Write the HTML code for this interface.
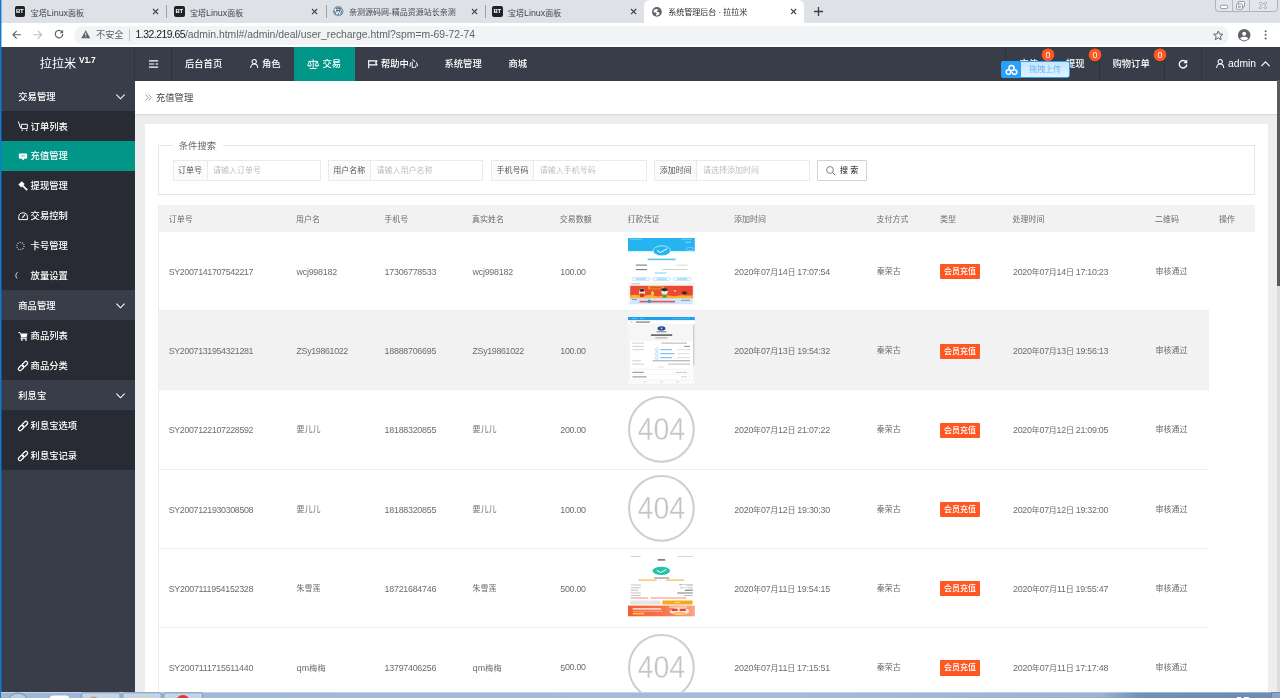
<!DOCTYPE html>
<html lang="zh-CN">
<head>
<meta charset="utf-8">
<title>系统管理后台 · 拉拉米</title>
<style>
*{box-sizing:border-box;margin:0;padding:0}
html,body{width:1280px;height:698px;overflow:hidden;background:#ededed}
body{position:relative;opacity:0.999;font-family:"Liberation Sans","Noto Sans CJK SC",sans-serif;font-size:8px;color:#666}
.a{position:absolute;white-space:nowrap}
svg{position:absolute;overflow:visible}
.w{color:#fff;font-weight:500}
.nav{font-size:9.3px;color:#fff;font-weight:500}
.tabt{font-size:8px;color:#45494e}
.bt{border-radius:2px;background:#202124;color:#fff;font-size:6px;font-weight:bold;text-align:center;letter-spacing:-0.2px}
.lbl{border:1px solid #eaeaea;background:#fbfbfb;font-size:8px;color:#555;text-align:center}
.inp{border:1px solid #eaeaea;border-left:0;background:#fff;font-size:8px;color:#bdbdbd}
.td{font-size:8px;color:#6c6c6c}
.l{font-size:8.9px}
.tag{background:#ff5722;color:#fff;font-size:8px;text-align:center;border-radius:1px;font-weight:500}
.c404{border:2px solid #d9d3d3;border-radius:50%;color:#cfc9c9;text-align:center;font-family:"DejaVu Sans Light","Liberation Sans",sans-serif;font-weight:200}
.badge{background:#ff5722;border-radius:50%;color:#fff;font-size:8px;text-align:center}
</style>
</head>
<body>
<!-- browser chrome -->
<div class="a " style="left:0px;top:0px;width:1280px;height:23px;background:#dee1e6"></div>
<div class="a " style="left:0px;top:23px;width:1280px;height:24px;background:#fff"></div>
<div class="a " style="left:644px;top:0px;width:160.4px;height:23px;background:#fff;border-radius:6px 6px 0 0"></div>
<svg style="left:640.5px;top:19.5px" width="167.5" height="3.5" viewBox="0 0 167.5 3.5"><path d="M0 3.5 C2.6 3.5 3.5 2.4 3.5 0 V3.5 Z M167.5 3.5 C164.8 3.5 163.9 2.4 163.9 0 V3.5 Z" fill="#fff"/></svg>
<div class="a bt" style="left:14.5px;top:6px;width:10.5px;height:10.5px;line-height:10.5px">BT</div>
<div class="a tabt" style="left:30.8px;top:7.00px;height:12px;line-height:12px;">宝塔<span class="l">Linux</span>面板</div>
<div class="a bt" style="left:174px;top:6px;width:10.5px;height:10.5px;line-height:10.5px">BT</div>
<div class="a tabt" style="left:190px;top:7.00px;height:12px;line-height:12px;">宝塔<span class="l">Linux</span>面板</div>
<div class="a bt" style="left:492px;top:6px;width:10.5px;height:10.5px;line-height:10.5px">BT</div>
<div class="a tabt" style="left:508px;top:7.00px;height:12px;line-height:12px;">宝塔<span class="l">Linux</span>面板</div>
<svg style="left:332.5px;top:6px" width="10.5" height="10.5" viewBox="0 0 20 20"><circle cx="10" cy="10" r="9.6" fill="#4a6b88"/><circle cx="10" cy="10" r="8" fill="none" stroke="#e8eef3" stroke-width="1"/><path d="M4 6.5 L7.6 16 L10 9.5 L12.4 16 L16 6.5 M3 6.3 H7 M8.4 6.3 H12.2" fill="none" stroke="#fff" stroke-width="1.9"/></svg>
<div class="a tabt" style="left:349px;top:7.00px;height:12px;line-height:12px;">亲测源码网-精品资源站长亲测</div>
<svg style="left:153.20000000000002px;top:8.700000000000001px" width="5.2" height="5.2" viewBox="0 0 5.2 5.2"><path d="M0 0 L5.2 5.2 M5.2 0 L0 5.2" stroke="#3c4043" stroke-width="1.1" fill="none"/></svg>
<svg style="left:311.9px;top:8.700000000000001px" width="5.2" height="5.2" viewBox="0 0 5.2 5.2"><path d="M0 0 L5.2 5.2 M5.2 0 L0 5.2" stroke="#3c4043" stroke-width="1.1" fill="none"/></svg>
<svg style="left:471.9px;top:8.700000000000001px" width="5.2" height="5.2" viewBox="0 0 5.2 5.2"><path d="M0 0 L5.2 5.2 M5.2 0 L0 5.2" stroke="#3c4043" stroke-width="1.1" fill="none"/></svg>
<svg style="left:631.4px;top:8.700000000000001px" width="5.2" height="5.2" viewBox="0 0 5.2 5.2"><path d="M0 0 L5.2 5.2 M5.2 0 L0 5.2" stroke="#3c4043" stroke-width="1.1" fill="none"/></svg>
<svg style="left:790.9px;top:8.700000000000001px" width="5.2" height="5.2" viewBox="0 0 5.2 5.2"><path d="M0 0 L5.2 5.2 M5.2 0 L0 5.2" stroke="#3c4043" stroke-width="1.1" fill="none"/></svg>
<div class="a " style="left:166px;top:5px;width:1px;height:13px;background:#9aa0a6"></div>
<div class="a " style="left:325.5px;top:5px;width:1px;height:13px;background:#9aa0a6"></div>
<div class="a " style="left:485px;top:5px;width:1px;height:13px;background:#9aa0a6"></div>
<svg style="left:652.3px;top:6.5px" width="9.8" height="9.8" viewBox="0 0 20 20"><circle cx="10" cy="10" r="10" fill="#5f6368"/><path d="M3.2 8.6 C3.4 5.6 6.4 3.6 9 4 C11 4.3 12.4 4.6 12 6 C11.6 7.4 9.6 7.4 9.4 8.8 C9.2 10.2 12 10 13.6 10.6 C15.6 11.4 16 13.6 14.4 15.4 C12.8 17.2 10 17.6 8.4 16.8 C7.2 16.2 8.2 14.6 9.2 13.8 C10.2 13 9.4 11.6 8 11.4 C6 11.1 3 11.6 3.2 8.6 Z" fill="#fff"/></svg>
<div class="a tabt" style="left:668.2px;top:7.00px;height:12px;line-height:12px;color:#2a2c30;">系统管理后台 · 拉拉米</div>
<svg style="left:813.5px;top:6.5px" width="9" height="9" viewBox="0 0 9 9"><path d="M4.5 0 V9 M0 4.5 H9" stroke="#3c4043" stroke-width="1.3" fill="none"/></svg>
<div class="a " style="left:1215px;top:-3px;width:62.5px;height:14.5px;border:1px solid #adb2bb;border-radius:0 0 3.5px 3.5px;background:#e2e5ea"></div>
<div class="a " style="left:1232px;top:0px;width:1px;height:11px;background:#b4b9c1"></div>
<div class="a " style="left:1248.5px;top:0px;width:1px;height:11px;background:#b4b9c1"></div>
<svg style="left:1215px;top:0px" width="63" height="12" viewBox="0 0 63 12"><rect x="5.3" y="5.2" width="7.4" height="3.4" rx="1.5" fill="#fff" stroke="#7d828b" stroke-width="0.8"/><rect x="23.2" y="1.5" width="6.3" height="5.4" rx="0.8" fill="#fff" stroke="#7d828b" stroke-width="0.8"/><rect x="21.5" y="3.9" width="6" height="5.4" rx="0.8" fill="#fff" stroke="#7d828b" stroke-width="0.8"/><rect x="23.6" y="5.9" width="1.8" height="1.6" fill="#e2e5ea" stroke="#7d828b" stroke-width="0.6"/><path d="M45.4 3.1 L50.6 7.7 M50.6 3.1 L45.4 7.7" stroke="#8f949d" stroke-width="2.3" stroke-linecap="round" fill="none"/><path d="M45.4 3.1 L50.6 7.7 M50.6 3.1 L45.4 7.7" stroke="#fff" stroke-width="1.05" stroke-linecap="round" fill="none"/></svg>
<svg style="left:11.5px;top:29.5px" width="9.5" height="9.5" viewBox="0 0 16 16"><path d="M15 8 H2 M8 1.5 L1.5 8 L8 14.5" stroke="#5f6368" stroke-width="1.8" fill="none"/></svg>
<svg style="left:32.8px;top:29.5px" width="9.5" height="9.5" viewBox="0 0 16 16"><path d="M1 8 H14 M8 1.5 L14.5 8 L8 14.5" stroke="#babcbe" stroke-width="1.8" fill="none"/></svg>
<svg style="left:54px;top:29.3px" width="10" height="10" viewBox="0 0 16 16"><path d="M13.2 5.2 A6 6 0 1 0 14 8" stroke="#5f6368" stroke-width="1.9" fill="none"/><path d="M14.6 1.2 V6.6 H9.2 Z" fill="#5f6368"/></svg>
<div class="a " style="left:73.5px;top:25.7px;width:1155px;height:19px;background:#f1f3f4;border-radius:9.5px"></div>
<svg style="left:80.5px;top:30.2px" width="9.5" height="8.6" viewBox="0 0 20 18"><path d="M10 0.5 L19.5 17.5 H0.5 Z" fill="#5f6368"/><path d="M10 6 V11.5 M10 13.2 V15.3" stroke="#f1f3f4" stroke-width="2.2"/></svg>
<div class="a " style="left:96px;top:28.60px;height:12px;line-height:12px;font-size:9.2px;color:#5f6368;">不安全</div>
<div class="a " style="left:128.8px;top:29px;width:1px;height:11.5px;background:#c4c7ca"></div>
<div class="a url" style="left:135.6px;top:28.00px;height:13px;line-height:13px;font-size:10.4px;color:#202124;letter-spacing:-0.501px;">1.32.219.65</div>
<div class="a url" style="left:184.9px;top:28.00px;height:13px;line-height:13px;font-size:10.4px;color:#5f6368;letter-spacing:-0.010px;">/admin.html#/admin/deal/user_recharge.html?spm=m-69-72-74</div>
<svg style="left:1212.5px;top:29.5px" width="10.5" height="10.5" viewBox="0 0 20 20"><path d="M10 1.8 L12.5 7.6 L18.8 8.1 L14 12.2 L15.5 18.4 L10 15.1 L4.5 18.4 L6 12.2 L1.2 8.1 L7.5 7.6 Z" fill="none" stroke="#5f6368" stroke-width="1.9" stroke-linejoin="round"/></svg>
<svg style="left:1238px;top:28.5px" width="12.4" height="12.4" viewBox="0 0 20 20"><circle cx="10" cy="10" r="10" fill="#5f6368"/><circle cx="10" cy="7.6" r="3.3" fill="#fff"/><path d="M3.4 15.2 C5 11.8 15 11.8 16.6 15.2 A8.2 8.2 0 0 1 3.4 15.2 Z" fill="#fff"/></svg>
<svg style="left:1263px;top:29px" width="5" height="12" viewBox="0 0 5 12"><circle cx="2.6" cy="2.2" r="1" fill="#5f6368"/><circle cx="2.6" cy="5.8" r="1" fill="#5f6368"/><circle cx="2.6" cy="9.4" r="1" fill="#5f6368"/></svg>
<!-- app header -->
<div class="a " style="left:0px;top:47px;width:1280px;height:34px;background:#393d49"></div>
<div class="a " style="left:134px;top:47px;width:1px;height:34px;background:rgba(0,0,0,.16)"></div>
<div class="a " style="left:171.3px;top:47px;width:1px;height:34px;background:rgba(0,0,0,.16)"></div>
<div class="a " style="left:1005.3px;top:47px;width:1px;height:34px;background:rgba(0,0,0,.16)"></div>
<div class="a " style="left:1052.3px;top:47px;width:1px;height:34px;background:rgba(0,0,0,.16)"></div>
<div class="a " style="left:1098.5px;top:47px;width:1px;height:34px;background:rgba(0,0,0,.16)"></div>
<div class="a " style="left:1163.8px;top:47px;width:1px;height:34px;background:rgba(0,0,0,.16)"></div>
<div class="a " style="left:1201.3px;top:47px;width:1px;height:34px;background:rgba(0,0,0,.16)"></div>
<div class="a w" style="left:39.8px;top:55.20px;height:18px;line-height:18px;font-size:12.1px;font-weight:400;">拉拉米</div>
<div class="a w" style="left:79px;top:55.20px;height:10px;line-height:10px;font-size:8.4px;font-weight:700;letter-spacing:-0.2px;">V1.7</div>
<svg style="left:149px;top:60px" width="9.5" height="8" viewBox="0 0 9.5 8"><path d="M0 0.8 H9.2 M0 4 H5 M6.4 4 H9.2 M0 7.2 H9.2" stroke="#fff" stroke-width="1.2" fill="none"/></svg>
<div class="a " style="left:294px;top:47px;width:60.5px;height:34px;background:#009688"></div>
<div class="a nav" style="left:185px;top:57.00px;height:14px;line-height:14px;">后台首页</div>
<svg style="left:249.8px;top:59.3px" width="8.4" height="9" viewBox="0 0 8.4 9"><circle cx="4.2" cy="2.7" r="2.15" fill="none" stroke="#fff" stroke-width="1.05"/><path d="M0.7 8.9 C0.7 6.4 2 5 4.2 5 C6.4 5 7.7 6.4 7.7 8.9" fill="none" stroke="#fff" stroke-width="1.05"/></svg>
<div class="a nav" style="left:262px;top:57.00px;height:14px;line-height:14px;">角色</div>
<svg style="left:306.6px;top:59.2px" width="12.4" height="10" viewBox="0 0 23 19"><path d="M11.5 0.5 V17 M5 18 H18 M2.5 4.5 H20.5 M4.5 4.5 L1 12 M4.5 4.5 L8 12 M18.5 4.5 L15 12 M18.5 4.5 L22 12" stroke="#fff" stroke-width="1.8" fill="none"/><path d="M0.5 12 H8.5 C8 15.5 1 15.5 0.5 12 Z M14.5 12 H22.5 C22 15.5 15 15.5 14.5 12 Z" fill="#fff"/></svg>
<div class="a nav" style="left:322.5px;top:57.00px;height:14px;line-height:14px;">交易</div>
<svg style="left:368px;top:59.8px" width="10" height="8.2" viewBox="0 0 10 8.2"><path d="M0.7 0 V8.2 M0.7 0.9 H9 L7.7 2.9 L9 4.9 H0.7" stroke="#fff" stroke-width="1.15" fill="none" stroke-linejoin="round"/></svg>
<div class="a nav" style="left:381px;top:57.00px;height:14px;line-height:14px;">帮助中心</div>
<div class="a nav" style="left:444.5px;top:57.00px;height:14px;line-height:14px;">系统管理</div>
<div class="a nav" style="left:508.5px;top:57.00px;height:14px;line-height:14px;">商城</div>
<div class="a nav" style="left:1019.5px;top:57.00px;height:14px;line-height:14px;">充值</div>
<div class="a nav" style="left:1066px;top:57.00px;height:14px;line-height:14px;">提现</div>
<div class="a nav" style="left:1112.5px;top:57.00px;height:14px;line-height:14px;">购物订单</div>
<svg style="left:1041.3px;top:47px" width="14" height="16" viewBox="0 0 14 16"><circle cx="7" cy="7.8" r="6.35" fill="#ff5722"/><text x="7" y="10.9" text-anchor="middle" font-family="Liberation Sans, sans-serif" font-size="8.8" fill="#fff">0</text></svg>
<svg style="left:1087.6px;top:47px" width="14" height="16" viewBox="0 0 14 16"><circle cx="7" cy="7.8" r="6.35" fill="#ff5722"/><text x="7" y="10.9" text-anchor="middle" font-family="Liberation Sans, sans-serif" font-size="8.8" fill="#fff">0</text></svg>
<svg style="left:1153.2px;top:47px" width="14" height="16" viewBox="0 0 14 16"><circle cx="7" cy="7.8" r="6.35" fill="#ff5722"/><text x="7" y="10.9" text-anchor="middle" font-family="Liberation Sans, sans-serif" font-size="8.8" fill="#fff">0</text></svg>
<svg style="left:1177.5px;top:59px" width="10" height="10" viewBox="0 0 16 16"><path d="M13 5 A6 6 0 1 0 14 9" stroke="#fff" stroke-width="2.2" fill="none"/><path d="M14.8 0.8 V6.8 H8.8 Z" fill="#fff"/></svg>
<svg style="left:1215.6px;top:59.3px" width="8.4" height="9" viewBox="0 0 8.4 9"><circle cx="4.2" cy="2.7" r="2.15" fill="none" stroke="#fff" stroke-width="1.05"/><path d="M0.7 8.9 C0.7 6.4 2 5 4.2 5 C6.4 5 7.7 6.4 7.7 8.9" fill="none" stroke="#fff" stroke-width="1.05"/></svg>
<div class="a nav" style="left:1228px;top:57.00px;height:14px;line-height:14px;font-size:10.3px;font-weight:400;">admin</div>
<svg style="left:1261px;top:61px" width="9" height="5.5" viewBox="0 0 9 5.5"><path d="M0.4 5.2 L4.5 0.8 L8.6 5.2" stroke="#fff" stroke-width="1.1" fill="none"/></svg>
<div class="a " style="left:1000.8px;top:61.3px;width:69.2px;height:16.5px;background:linear-gradient(#c4e5ff,#e3f3ff);border:1px solid #2ba0f8;border-radius:2.5px"></div>
<div class="a " style="left:1000.8px;top:61.3px;width:20px;height:16.5px;background:#2ba0f8;border-radius:2.5px 0 0 2.5px"></div>
<svg style="left:1004.5px;top:63.5px" width="13" height="12" viewBox="0 0 26 24"><circle cx="13" cy="8" r="5.2" fill="none" stroke="#fff" stroke-width="3"/><circle cx="7" cy="16" r="4.6" fill="none" stroke="#fff" stroke-width="3"/><path d="M14.5 16 A4.6 4.6 0 1 0 19 11.5" fill="none" stroke="#fff" stroke-width="3"/></svg>
<div class="a " style="left:1029.3px;top:63.80px;height:12px;line-height:12px;font-size:8px;color:#6bb2f5;">拖拽上传</div>
<!-- sidebar -->
<div class="a " style="left:0px;top:81px;width:135px;height:618px;background:#393d49"></div>
<div class="a nav" style="left:18.3px;top:89.65px;height:14px;line-height:14px;">交易管理</div>
<svg style="left:116px;top:93.65px" width="9" height="5.5" viewBox="0 0 9 5.5"><path d="M0.4 0.6 L4.5 4.8 L8.6 0.6" stroke="#fff" stroke-width="1.1" fill="none"/></svg>
<div class="a " style="left:0px;top:110.7px;width:135px;height:29.95px;background:#282b33"></div>
<svg style="left:17.8px;top:121.45px" width="10" height="10" viewBox="0 0 10 10"><path d="M0.3 0.4 L2.6 7.2" stroke="#fff" stroke-width="1" fill="none"/><path d="M3.4 3.3 H9.3 V7.6 H3.4 Z" stroke="#fff" stroke-width="1" fill="none"/><circle cx="4.2" cy="9.3" r="0.75" fill="#fff"/><circle cx="8.6" cy="9.3" r="0.75" fill="#fff"/></svg>
<div class="a nav" style="left:30.6px;top:119.55px;height:14px;line-height:14px;">订单列表</div>
<div class="a " style="left:0px;top:140.6px;width:135px;height:29.95px;background:#009688"></div>
<svg style="left:17.8px;top:151.35px" width="10" height="10" viewBox="0 0 10 10"><rect x="0.9" y="2.5" width="8.2" height="5.2" rx="0.8" fill="#fff"/><rect x="4.3" y="7.5" width="1.6" height="1.6" fill="#fff"/><rect x="3.2" y="4.6" width="3.6" height="0.7" fill="#009688"/></svg>
<div class="a nav" style="left:30.6px;top:149.45px;height:14px;line-height:14px;">充值管理</div>
<div class="a " style="left:0px;top:170.5px;width:135px;height:29.95px;background:#282b33"></div>
<svg style="left:17.8px;top:181.25px" width="10" height="10" viewBox="0 0 10 10"><path d="M0.4 3.6 L3.8 0.3 L6.6 3.1 L5.5 4.2 L9.8 8.6 L8.6 9.8 L4.3 5.4 L3.2 6.5 Z" fill="#fff"/></svg>
<div class="a nav" style="left:30.6px;top:179.35px;height:14px;line-height:14px;">提现管理</div>
<div class="a " style="left:0px;top:200.4px;width:135px;height:29.95px;background:#282b33"></div>
<svg style="left:17.8px;top:211.15px" width="10" height="10" viewBox="0 0 10 10"><path d="M0.8 8.6 V5.4 C0.8 0.6 9.4 0.6 9.4 5.4 V8.6 Z" stroke="#fff" stroke-width="1" fill="none" stroke-linejoin="round"/><path d="M4.2 6.9 L7.2 3.4" stroke="#fff" stroke-width="1.1"/></svg>
<div class="a nav" style="left:30.6px;top:209.25px;height:14px;line-height:14px;">交易控制</div>
<div class="a " style="left:0px;top:230.3px;width:135px;height:29.95px;background:#282b33"></div>
<svg style="left:17.8px;top:241.05px" width="10" height="10" viewBox="0 0 10 10"><circle cx="2.4" cy="5" r="3.6" stroke="#e8e8ea" stroke-width="1.1" stroke-dasharray="0.9 1.36" fill="none"/></svg>
<div class="a nav" style="left:30.6px;top:239.15px;height:14px;line-height:14px;">卡号管理</div>
<div class="a " style="left:0px;top:260.2px;width:135px;height:29.95px;background:#282b33"></div>
<svg style="left:17.8px;top:270.95px" width="10" height="10" viewBox="0 0 10 10"><path d="M-0.4 1.2 C-2.6 3.2 -2.6 5.4 -1.2 7.4" stroke="#dcdcdf" stroke-width="1" fill="none"/></svg>
<div class="a nav" style="left:30.6px;top:269.05px;height:14px;line-height:14px;">放量设置</div>
<div class="a nav" style="left:18.3px;top:298.95px;height:14px;line-height:14px;">商品管理</div>
<svg style="left:116px;top:302.95px" width="9" height="5.5" viewBox="0 0 9 5.5"><path d="M0.4 0.6 L4.5 4.8 L8.6 0.6" stroke="#fff" stroke-width="1.1" fill="none"/></svg>
<div class="a " style="left:0px;top:320.0px;width:135px;height:29.95px;background:#282b33"></div>
<svg style="left:17.8px;top:330.75px" width="10" height="10" viewBox="0 0 10 10"><path d="M0.3 1.6 H2 L2.5 2.8" stroke="#fff" stroke-width="1" fill="none"/><path d="M2.2 2.6 H9.4 L8.6 6.6 H3.2 Z" fill="#fff"/><path d="M3.2 6.4 L2.9 7.6 H8.8" stroke="#fff" stroke-width="0.9" fill="none"/><circle cx="3.8" cy="8.9" r="0.85" fill="#fff"/><circle cx="8" cy="8.9" r="0.85" fill="#fff"/></svg>
<div class="a nav" style="left:30.6px;top:328.85px;height:14px;line-height:14px;">商品列表</div>
<div class="a " style="left:0px;top:349.9px;width:135px;height:29.95px;background:#282b33"></div>
<svg style="left:17.8px;top:360.65px" width="10" height="10" viewBox="0 0 10 10"><g transform="rotate(-45 5 5)" stroke="#fff" stroke-width="1.25" fill="none"><rect x="-0.9" y="3.3" width="6.4" height="3.4" rx="1.7"/><rect x="4.5" y="3.3" width="6.4" height="3.4" rx="1.7"/></g></svg>
<div class="a nav" style="left:30.6px;top:358.75px;height:14px;line-height:14px;">商品分类</div>
<div class="a nav" style="left:18.3px;top:389.25px;height:14px;line-height:14px;">利息宝</div>
<svg style="left:116px;top:393.25px" width="9" height="5.5" viewBox="0 0 9 5.5"><path d="M0.4 0.6 L4.5 4.8 L8.6 0.6" stroke="#fff" stroke-width="1.1" fill="none"/></svg>
<div class="a " style="left:0px;top:409.7px;width:135px;height:29.95px;background:#282b33"></div>
<svg style="left:17.8px;top:421.05px" width="10" height="10" viewBox="0 0 10 10"><g transform="rotate(-45 5 5)" stroke="#fff" stroke-width="1.25" fill="none"><rect x="-0.9" y="3.3" width="6.4" height="3.4" rx="1.7"/><rect x="4.5" y="3.3" width="6.4" height="3.4" rx="1.7"/></g></svg>
<div class="a nav" style="left:30.6px;top:419.15px;height:14px;line-height:14px;">利息宝选项</div>
<div class="a " style="left:0px;top:439.6px;width:135px;height:29.95px;background:#282b33"></div>
<svg style="left:17.8px;top:450.95px" width="10" height="10" viewBox="0 0 10 10"><g transform="rotate(-45 5 5)" stroke="#fff" stroke-width="1.25" fill="none"><rect x="-0.9" y="3.3" width="6.4" height="3.4" rx="1.7"/><rect x="4.5" y="3.3" width="6.4" height="3.4" rx="1.7"/></g></svg>
<div class="a nav" style="left:30.6px;top:449.05px;height:14px;line-height:14px;">利息宝记录</div>
<div class="a " style="left:0px;top:0px;width:1px;height:698px;background:#0d7ccf"></div>
<div class="a " style="left:1px;top:0px;width:1px;height:698px;background:rgba(13,124,207,.45)"></div>
<!-- content -->
<div class="a " style="left:135px;top:81px;width:1145px;height:33px;background:#fff;box-shadow:0 1px 1.5px rgba(0,0,0,.10)"></div>
<svg style="left:145px;top:94.2px" width="7" height="7" viewBox="0 0 7 7"><path d="M0.5 0.5 L3.2 3.5 L0.5 6.5 M3.5 0.5 L6.2 3.5 L3.5 6.5" stroke="#888" stroke-width="0.8" fill="none"/></svg>
<div class="a " style="left:156px;top:91.30px;height:14px;line-height:14px;font-size:9.3px;color:#444;">充值管理</div>
<div class="a " style="left:144.7px;top:124px;width:1123.3px;height:600px;background:#fff"></div>
<div class="a " style="left:158.2px;top:145.4px;width:1096.6px;height:49.2px;border:1px solid #e6e6e6"></div>
<div class="a " style="left:172.5px;top:140px;width:50px;height:10px;background:#fff"></div>
<div class="a " style="left:178.8px;top:139.20px;height:14px;line-height:14px;font-size:9.3px;color:#666;">条件搜索</div>
<div class="a lbl" style="left:172.5px;top:160px;width:35px;height:20.6px;line-height:20.4px">订单号</div>
<div class="a inp" style="left:207.5px;top:160px;width:113.2px;height:20.6px;line-height:20.4px;padding-left:5.5px">请输入订单号</div>
<div class="a lbl" style="left:327.5px;top:160px;width:43.5px;height:20.6px;line-height:20.4px">用户名称</div>
<div class="a inp" style="left:371.0px;top:160px;width:112px;height:20.6px;line-height:20.4px;padding-left:5.5px">请输入用户名称</div>
<div class="a lbl" style="left:490.7px;top:160px;width:43.5px;height:20.6px;line-height:20.4px">手机号码</div>
<div class="a inp" style="left:534.2px;top:160px;width:112.5px;height:20.6px;line-height:20.4px;padding-left:5.5px">请输入手机号码</div>
<div class="a lbl" style="left:654px;top:160px;width:43.4px;height:20.6px;line-height:20.4px">添加时间</div>
<div class="a inp" style="left:697.4px;top:160px;width:113px;height:20.6px;line-height:20.4px;padding-left:5.5px">请选择添加时间</div>
<div class="a " style="left:817px;top:160px;width:50px;height:20.6px;border:1px solid #d2d2d2;background:#fff;border-radius:1px"></div>
<svg style="left:825.5px;top:165.5px" width="10" height="10" viewBox="0 0 10 10"><circle cx="4" cy="4" r="3.4" stroke="#666" stroke-width="0.8" fill="none"/><path d="M6.5 6.5 L9.2 9.2" stroke="#666" stroke-width="1"/></svg>
<div class="a " style="left:840px;top:165.00px;height:12px;line-height:12px;font-size:8px;color:#444;font-weight:500;">搜 索</div>
<div class="a " style="left:1277.3px;top:80.4px;width:2.7px;height:618px;background:#dcdcdc"></div>
<div class="a " style="left:1277.3px;top:80.4px;width:2.7px;height:206px;background:#5a5a5a"></div>
<!-- table -->
<div class="a " style="left:158.2px;top:205px;width:1096.6px;height:26.6px;background:#f2f2f2"></div>
<div class="a td" style="left:168.7px;top:214.30px;height:12px;line-height:12px;">订单号</div>
<div class="a td" style="left:296px;top:214.30px;height:12px;line-height:12px;">用户名</div>
<div class="a td" style="left:384.3px;top:214.30px;height:12px;line-height:12px;">手机号</div>
<div class="a td" style="left:472px;top:214.30px;height:12px;line-height:12px;">真实姓名</div>
<div class="a td" style="left:559.7px;top:214.30px;height:12px;line-height:12px;">交易数额</div>
<div class="a td" style="left:627.5px;top:214.30px;height:12px;line-height:12px;">打款凭证</div>
<div class="a td" style="left:734px;top:214.30px;height:12px;line-height:12px;">添加时间</div>
<div class="a td" style="left:876.5px;top:214.30px;height:12px;line-height:12px;">支付方式</div>
<div class="a td" style="left:940px;top:214.30px;height:12px;line-height:12px;">类型</div>
<div class="a td" style="left:1012.5px;top:214.30px;height:12px;line-height:12px;">处理时间</div>
<div class="a td" style="left:1155px;top:214.30px;height:12px;line-height:12px;">二维码</div>
<div class="a td" style="left:1219px;top:214.30px;height:12px;line-height:12px;">操作</div>
<svg width="0" height="0" style="left:0;top:0"><defs><filter id="bl" x="-5%" y="-5%" width="110%" height="110%"><feGaussianBlur stdDeviation="0.45"/></filter><filter id="bl2" x="-5%" y="-5%" width="110%" height="110%"><feGaussianBlur stdDeviation="0.3"/></filter></defs></svg>
<div class="a " style="left:158.2px;top:310.13px;width:1051px;height:1px;background:#ededed"></div>
<div class="a td" style="left:168.7px;top:265.91px;height:12px;line-height:12px;letter-spacing:-0.352px;"><span class="l">SY2007141707542217</span></div>
<div class="a td" style="left:296.5px;top:265.91px;height:12px;line-height:12px;letter-spacing:-0.226px;"><span class="l">wcj998182</span></div>
<div class="a td" style="left:384.6px;top:265.91px;height:12px;line-height:12px;letter-spacing:-0.254px;"><span class="l">17306778533</span></div>
<div class="a td" style="left:472.5px;top:265.91px;height:12px;line-height:12px;letter-spacing:-0.226px;"><span class="l">wcj998182</span></div>
<div class="a td" style="left:560.3px;top:265.91px;height:12px;line-height:12px;letter-spacing:-0.293px;"><span class="l">100.00</span></div>
<svg style="left:627.8px;top:237.6px" width="66.8" height="66.8" viewBox="0 0 66.8 66.8"><rect width="66.8" height="66.8" fill="#fff"/><g filter="url(#bl)"><rect x="0" y="0" width="66.8" height="13.2" fill="#27b4f1"/><rect x="2" y="0.80" width="12.0" height="0.8" fill="#7fd2f7"/><rect x="53" y="0.80" width="11.0" height="0.8" fill="#7fd2f7"/><rect x="57.5" y="3.70" width="5.5" height="1" fill="#9adcf9"/><rect x="58.5" y="9.5" width="7" height="3" fill="none" rx="1.5" stroke="#8fd8f8" stroke-width="0.6"/><ellipse cx="33.8" cy="12.8" rx="8.7" ry="5" fill="#27b4f1" stroke="#dff4fd" stroke-width="0.7"/><path d="M29.2 12.6 L32.6 14.6 L39.2 10.6" stroke="#fff" stroke-width="1" fill="none"/><rect x="19.6" y="20.60" width="27.9" height="1.6" fill="#62c0ef"/><rect x="7.8" y="26.55" width="11.2" height="1.1" fill="#7d7d7d"/><rect x="48.5" y="26.70" width="11.0" height="0.8" fill="#d2d2d2"/><rect x="7.8" y="31.05" width="11.2" height="1.1" fill="#7d7d7d"/><rect x="34.5" y="31.20" width="25.0" height="0.8" fill="#c6c6c6"/><rect x="26.5" y="34.50" width="12.0" height="1" fill="#86cdf3"/><rect x="3.9" y="39.6" width="18" height="2.9" fill="#f4fbff" rx="1.45" stroke="#a9dcf7" stroke-width="0.6"/><rect x="7.9" y="40.60" width="10.0" height="0.9" fill="#6ec2f0"/><rect x="24.6" y="39.6" width="18" height="2.9" fill="#f4fbff" rx="1.45" stroke="#a9dcf7" stroke-width="0.6"/><rect x="28.6" y="40.60" width="10.0" height="0.9" fill="#6ec2f0"/><rect x="45.2" y="39.6" width="18" height="2.9" fill="#f4fbff" rx="1.45" stroke="#a9dcf7" stroke-width="0.6"/><rect x="49.2" y="40.60" width="10.0" height="0.9" fill="#6ec2f0"/><rect x="0" y="44.4" width="66.8" height="22.4" fill="#f6f6f6"/><rect x="3.5" y="45.40" width="8.5" height="0.8" fill="#bdbdbd"/><defs><linearGradient id="g1" x1="0" x2="1"><stop offset="0" stop-color="#ea4a30"/><stop offset="0.5" stop-color="#ee4d33"/><stop offset="1" stop-color="#e9432f"/></linearGradient></defs><rect x="2.2" y="47.8" width="62.6" height="12.6" fill="url(#g1)"/><path d="M2.2 60.4 V57.5 C8 55 12 59 18 57.5 C24 56 27 59.5 33 58 C40 56 44 59.5 50 57.8 C56 56.3 60 58.5 64.8 57 V60.4 Z" fill="#f9b233"/><rect x="20" y="48.6" width="16" height="2.6" fill="#f7a928" rx="0.6"/><rect x="22" y="49.45" width="12.0" height="0.9" fill="#8a3a1a"/><ellipse cx="14" cy="54" rx="3" ry="3.6" fill="#f8e3d0"/><ellipse cx="14" cy="52.2" rx="2.6" ry="1.5" fill="#3b2a22"/><rect x="12" y="55.5" width="4" height="3.4" fill="#d8322a"/><ellipse cx="36.5" cy="53.6" rx="3.2" ry="3.6" fill="#f8e3d0"/><ellipse cx="36.5" cy="51.6" rx="3.3" ry="1.7" fill="#2a2a2a"/><rect x="34.5" y="56.6" width="4" height="3" fill="#3c9c63"/><ellipse cx="24.5" cy="55.5" rx="1.6" ry="2.6" fill="#f4c542"/><ellipse cx="56.5" cy="54.8" rx="2.6" ry="1.6" fill="#3a2a2a"/><ellipse cx="47" cy="52.8" rx="1.2" ry="0.9" fill="#f7c8b8"/><rect x="2.2" y="60.4" width="62.6" height="5.6" fill="#cfe9fa"/><rect x="11.5" y="62.80" width="35.5" height="1.6" fill="#e8505a"/><circle cx="21.3" cy="63.3" r="1.7" fill="#3b8fe8"/><rect x="4" y="61.20" width="5.0" height="0.8" fill="#5e86b8"/><rect x="53" y="61.80" width="9.0" height="1.2" fill="#8aa6c4"/></g></svg>
<div class="a td" style="left:734.3px;top:265.91px;height:12px;line-height:12px;letter-spacing:-0.234px;"><span class="l">2020</span>年<span class="l">07</span>月<span class="l">14</span>日 <span class="l">17:07:54</span></div>
<div class="a td" style="left:876.8px;top:265.91px;height:12px;line-height:12px;">秦荣古</div>
<div class="a tag" style="left:940.4px;top:264.31px;width:39.2px;height:15.2px;line-height:15.2px">会员充值</div>
<div class="a td" style="left:1013px;top:265.91px;height:12px;line-height:12px;letter-spacing:-0.254px;"><span class="l">2020</span>年<span class="l">07</span>月<span class="l">14</span>日 <span class="l">17:10:23</span></div>
<div class="a td" style="left:1155.6px;top:265.91px;height:12px;line-height:12px;">审核通过</div>
<div class="a " style="left:158.2px;top:310.83px;width:1051px;height:79.23px;background:#f2f2f2"></div>
<div class="a " style="left:158.2px;top:389.36px;width:1051px;height:1px;background:#ededed"></div>
<div class="a td" style="left:168.7px;top:345.14px;height:12px;line-height:12px;letter-spacing:-0.352px;"><span class="l">SY2007131954321281</span></div>
<div class="a td" style="left:296.5px;top:345.14px;height:12px;line-height:12px;letter-spacing:-0.351px;"><span class="l">ZSy19861022</span></div>
<div class="a td" style="left:384.6px;top:345.14px;height:12px;line-height:12px;letter-spacing:-0.254px;"><span class="l">18888706695</span></div>
<div class="a td" style="left:472.5px;top:345.14px;height:12px;line-height:12px;letter-spacing:-0.351px;"><span class="l">ZSy19861022</span></div>
<div class="a td" style="left:560.3px;top:345.14px;height:12px;line-height:12px;letter-spacing:-0.293px;"><span class="l">100.00</span></div>
<svg style="left:627.8px;top:316.83px" width="66.8" height="66.8" viewBox="0 0 66.8 66.8"><rect width="66.8" height="66.8" fill="#f4f4f5"/><g filter="url(#bl)"><rect x="0" y="0" width="66.8" height="3.3" fill="#1ba1ef"/><rect x="3.5" y="1.25" width="5.5" height="0.7" fill="#6cc4f6"/><rect x="12" y="1.25" width="4.0" height="0.7" fill="#6cc4f6"/><circle cx="45.3" cy="1.7" r="0.8" fill="#58d36a"/><rect x="47" y="1.35" width="15.0" height="0.7" fill="#58b8f3"/><rect x="0" y="3.3" width="66.8" height="3.9" fill="#fff"/><rect x="2.5" y="4.70" width="2.0" height="0.8" fill="#62b4f2"/><rect x="7.8" y="4.55" width="14.0" height="1.1" fill="#6b6b6b"/><rect x="0" y="7.2" width="66.8" height="16.8" fill="#f6f6f7"/><rect x="65.2" y="7.8" width="1.2" height="40.2" fill="#c6c6c6"/><ellipse cx="33.5" cy="11.4" rx="3.9" ry="2.05" fill="#23489c"/><circle cx="33.5" cy="11.4" r="0.8" fill="#d6e2fb"/><rect x="28.7" y="14.35" width="9.5" height="0.9" fill="#6a6a6a"/><rect x="22.9" y="17.20" width="21.3" height="1.8" fill="#6e6e6e"/><rect x="27.2" y="20.45" width="12.0" height="0.9" fill="#9a9a9a"/><rect x="2.2" y="24" width="62.4" height="27.9" fill="#fff"/><rect x="4.4" y="25.65" width="11.6" height="0.9" fill="#cbcbcb"/><rect x="33.3" y="25.65" width="25.7" height="0.9" fill="#a8a8a8"/><rect x="4.4" y="28.95" width="11.6" height="0.9" fill="#cbcbcb"/><rect x="56.2" y="28.90" width="5.8" height="1" fill="#8a8a8a"/><rect x="4.4" y="32.25" width="11.6" height="0.9" fill="#cbcbcb"/><rect x="28.5" y="31.5" width="0.6" height="10" fill="#b9daf8"/><circle cx="28.8" cy="32.7" r="1.7" fill="#eef6fe" stroke="#a3cff7" stroke-width="0.5"/><rect x="32.3" y="32.20" width="11.5" height="1" fill="#6db2f2"/><rect x="49.3" y="32.30" width="12.7" height="0.8" fill="#d6d6d6"/><circle cx="28.8" cy="36.7" r="1.7" fill="#eef6fe" stroke="#a3cff7" stroke-width="0.5"/><rect x="32.3" y="36.20" width="14.1" height="1" fill="#6db2f2"/><rect x="49.3" y="36.30" width="12.7" height="0.8" fill="#d6d6d6"/><circle cx="28.8" cy="40.7" r="1.7" fill="#eef6fe" stroke="#a3cff7" stroke-width="0.5"/><rect x="32.3" y="40.20" width="11.5" height="1" fill="#6db2f2"/><rect x="49.3" y="40.30" width="12.7" height="0.8" fill="#d6d6d6"/><rect x="4.4" y="43.35" width="8.4" height="0.9" fill="#cbcbcb"/><rect x="24.7" y="43.35" width="37.3" height="0.9" fill="#9a9a9a"/><rect x="4.4" y="46.65" width="11.6" height="0.9" fill="#cbcbcb"/><rect x="40.3" y="46.65" width="21.7" height="0.9" fill="#b3b3b3"/><rect x="29.3" y="49.65" width="6.7" height="0.7" fill="#d0d0d0"/><rect x="0" y="51.9" width="66.8" height="1" fill="#f3f3f4"/><rect x="2.2" y="52.9" width="62.4" height="9.1" fill="#fff"/><rect x="4.4" y="54.80" width="11.4" height="1" fill="#8a8a8a"/><rect x="47.7" y="54.90" width="11.3" height="0.8" fill="#b8b8b8"/><rect x="61" y="54.90" width="1.0" height="0.8" fill="#ccc"/><rect x="2.2" y="57.35" width="62.4" height="0.5" fill="#eeeeee"/><rect x="4.4" y="59.40" width="14.2" height="1" fill="#8a8a8a"/><rect x="53" y="59.50" width="6.0" height="0.8" fill="#c2c2c2"/><rect x="61" y="59.50" width="1.0" height="0.8" fill="#ccc"/><rect x="0" y="62.9" width="66.8" height="3.9" fill="#fbfbfb"/><rect x="15.4" y="64.40" width="3.2" height="0.8" fill="#d4d4d4"/><rect x="31.799999999999997" y="64.40" width="3.2" height="0.8" fill="#d4d4d4"/><rect x="48.0" y="64.40" width="3.2" height="0.8" fill="#d4d4d4"/></g></svg>
<div class="a td" style="left:734.3px;top:345.14px;height:12px;line-height:12px;letter-spacing:-0.234px;"><span class="l">2020</span>年<span class="l">07</span>月<span class="l">13</span>日 <span class="l">19:54:32</span></div>
<div class="a td" style="left:876.8px;top:345.14px;height:12px;line-height:12px;">秦荣古</div>
<div class="a tag" style="left:940.4px;top:343.54px;width:39.2px;height:15.2px;line-height:15.2px">会员充值</div>
<div class="a td" style="left:1013px;top:345.14px;height:12px;line-height:12px;letter-spacing:-0.254px;"><span class="l">2020</span>年<span class="l">07</span>月<span class="l">13</span>日 <span class="l">19:56:13</span></div>
<div class="a td" style="left:1155.6px;top:345.14px;height:12px;line-height:12px;">审核通过</div>
<div class="a " style="left:158.2px;top:468.59px;width:1051px;height:1px;background:#ededed"></div>
<div class="a td" style="left:168.7px;top:424.38px;height:12px;line-height:12px;letter-spacing:-0.352px;"><span class="l">SY2007122107228592</span></div>
<div class="a td" style="left:296.5px;top:424.38px;height:12px;line-height:12px;letter-spacing:0.000px;">要儿儿</div>
<div class="a td" style="left:384.6px;top:424.38px;height:12px;line-height:12px;letter-spacing:-0.254px;"><span class="l">18188320855</span></div>
<div class="a td" style="left:472.5px;top:424.38px;height:12px;line-height:12px;letter-spacing:0.000px;">要儿儿</div>
<div class="a td" style="left:560.3px;top:424.38px;height:12px;line-height:12px;letter-spacing:-0.293px;"><span class="l">200.00</span></div>
<svg style="left:627.8px;top:396.06px" width="66.8" height="66.8" viewBox="0 0 66.8 66.8"><circle cx="33.4" cy="33.4" r="32.35" fill="none" stroke="#d3cece" stroke-width="2.1"/><text x="33.4" y="43.8" text-anchor="middle" font-family="Liberation Sans, sans-serif" font-size="31.6" textLength="47.6" lengthAdjust="spacingAndGlyphs" fill="#c9c4c4">404</text><text x="33.4" y="43.8" text-anchor="middle" font-family="Liberation Sans, sans-serif" font-size="31.6" textLength="47.6" lengthAdjust="spacingAndGlyphs" fill="none" stroke="#fff" stroke-width="0.3">404</text></svg>
<div class="a td" style="left:734.3px;top:424.38px;height:12px;line-height:12px;letter-spacing:-0.234px;"><span class="l">2020</span>年<span class="l">07</span>月<span class="l">12</span>日 <span class="l">21:07:22</span></div>
<div class="a td" style="left:876.8px;top:424.38px;height:12px;line-height:12px;">秦荣古</div>
<div class="a tag" style="left:940.4px;top:422.77px;width:39.2px;height:15.2px;line-height:15.2px">会员充值</div>
<div class="a td" style="left:1013px;top:424.38px;height:12px;line-height:12px;letter-spacing:-0.254px;"><span class="l">2020</span>年<span class="l">07</span>月<span class="l">12</span>日 <span class="l">21:09:05</span></div>
<div class="a td" style="left:1155.6px;top:424.38px;height:12px;line-height:12px;">审核通过</div>
<div class="a " style="left:158.2px;top:547.82px;width:1051px;height:1px;background:#ededed"></div>
<div class="a td" style="left:168.7px;top:503.60px;height:12px;line-height:12px;letter-spacing:-0.352px;"><span class="l">SY2007121930308508</span></div>
<div class="a td" style="left:296.5px;top:503.60px;height:12px;line-height:12px;letter-spacing:0.000px;">要儿儿</div>
<div class="a td" style="left:384.6px;top:503.60px;height:12px;line-height:12px;letter-spacing:-0.254px;"><span class="l">18188320855</span></div>
<div class="a td" style="left:472.5px;top:503.60px;height:12px;line-height:12px;letter-spacing:0.000px;">要儿儿</div>
<div class="a td" style="left:560.3px;top:503.60px;height:12px;line-height:12px;letter-spacing:-0.293px;"><span class="l">100.00</span></div>
<svg style="left:627.8px;top:475.29px" width="66.8" height="66.8" viewBox="0 0 66.8 66.8"><circle cx="33.4" cy="33.4" r="32.35" fill="none" stroke="#d3cece" stroke-width="2.1"/><text x="33.4" y="43.8" text-anchor="middle" font-family="Liberation Sans, sans-serif" font-size="31.6" textLength="47.6" lengthAdjust="spacingAndGlyphs" fill="#c9c4c4">404</text><text x="33.4" y="43.8" text-anchor="middle" font-family="Liberation Sans, sans-serif" font-size="31.6" textLength="47.6" lengthAdjust="spacingAndGlyphs" fill="none" stroke="#fff" stroke-width="0.3">404</text></svg>
<div class="a td" style="left:734.3px;top:503.60px;height:12px;line-height:12px;letter-spacing:-0.234px;"><span class="l">2020</span>年<span class="l">07</span>月<span class="l">12</span>日 <span class="l">19:30:30</span></div>
<div class="a td" style="left:876.8px;top:503.60px;height:12px;line-height:12px;">秦荣古</div>
<div class="a tag" style="left:940.4px;top:502.0px;width:39.2px;height:15.2px;line-height:15.2px">会员充值</div>
<div class="a td" style="left:1013px;top:503.60px;height:12px;line-height:12px;letter-spacing:-0.254px;"><span class="l">2020</span>年<span class="l">07</span>月<span class="l">12</span>日 <span class="l">19:32:00</span></div>
<div class="a td" style="left:1155.6px;top:503.60px;height:12px;line-height:12px;">审核通过</div>
<div class="a " style="left:158.2px;top:627.05px;width:1051px;height:1px;background:#ededed"></div>
<div class="a td" style="left:168.7px;top:582.84px;height:12px;line-height:12px;letter-spacing:-0.278px;"><span class="l">SY2007111954152328</span></div>
<div class="a td" style="left:296.5px;top:582.84px;height:12px;line-height:12px;letter-spacing:0.000px;">朱雪莲</div>
<div class="a td" style="left:384.6px;top:582.84px;height:12px;line-height:12px;letter-spacing:-0.254px;"><span class="l">18721684746</span></div>
<div class="a td" style="left:472.5px;top:582.84px;height:12px;line-height:12px;letter-spacing:0.000px;">朱雪莲</div>
<div class="a td" style="left:560.3px;top:582.84px;height:12px;line-height:12px;letter-spacing:-0.293px;"><span class="l">500.00</span></div>
<svg style="left:627.8px;top:554.52px" width="66.8" height="66.8" viewBox="0 0 66.8 66.8"><rect width="66.8" height="66.8" fill="#fff"/><g filter="url(#bl)"><rect x="2.8" y="1.00" width="9.8" height="0.8" fill="#c3c3c3"/><rect x="49.7" y="1.00" width="15.1" height="0.8" fill="#cdcdcd"/><rect x="29.6" y="4.25" width="7.6" height="1.3" fill="#5a5a5a"/><ellipse cx="33.3" cy="15.8" rx="8.75" ry="4.1" fill="#20c3a7"/><path d="M28.7 15.4 L32.6 17.5 L38.3 14.6" stroke="#fff" stroke-width="1" fill="none"/><rect x="26.2" y="22.50" width="15.0" height="1" fill="#7a7a7a"/><rect x="10.2" y="24.60" width="18.5" height="1" fill="#f5ab2c"/><rect x="31.6" y="24.70" width="1.0" height="0.8" fill="#f8cf8a"/><rect x="38.2" y="24.60" width="18.0" height="1" fill="#f5ab2c"/><rect x="2.8" y="29.55" width="10.0" height="0.9" fill="#bdbdbd"/><rect x="51.2" y="29.35" width="3.3" height="0.9" fill="#9a9a9a"/><rect x="55" y="28.95" width="3.0" height="0.7" fill="#bbb"/><rect x="58.5" y="29.55" width="6.3" height="0.9" fill="#9a9a9a"/><rect x="2.8" y="32.35" width="10.0" height="0.9" fill="#bdbdbd"/><rect x="52.2" y="32.40" width="3.3" height="0.8" fill="#b0b0b0"/><rect x="56" y="31.85" width="3.0" height="0.7" fill="#ccc"/><rect x="59.5" y="32.40" width="5.3" height="0.8" fill="#b0b0b0"/><rect x="2.8" y="34.75" width="7.6" height="0.9" fill="#bdbdbd"/><rect x="56.7" y="34.70" width="8.1" height="1" fill="#6e6e6e"/><rect x="2.8" y="37.55" width="10.0" height="0.9" fill="#bdbdbd"/><rect x="49.2" y="37.50" width="15.6" height="1" fill="#808080"/><rect x="2.8" y="40.15" width="10.0" height="0.9" fill="#bdbdbd"/><rect x="55.8" y="40.15" width="9.0" height="0.9" fill="#b5b5b5"/><rect x="2.8" y="42.55" width="17.5" height="0.9" fill="#f4806e"/><rect x="22.6" y="42.55" width="35.6" height="0.9" fill="#f4806e"/><rect x="2.2" y="45.6" width="30.2" height="4" fill="#e3e3e3" rx="0.8"/><rect x="11.5" y="47.20" width="12.5" height="0.8" fill="#efefef"/><rect x="34.4" y="45.6" width="30.2" height="4" fill="#f8a81a" rx="0.8"/><rect x="46.5" y="47.20" width="6.0" height="0.8" fill="#fde2ac"/><defs><linearGradient id="g5" x1="0" x2="1"><stop offset="0" stop-color="#f45a36"/><stop offset="0.55" stop-color="#f6764c"/><stop offset="1" stop-color="#f9a683"/></linearGradient></defs><rect x="0" y="50.6" width="66.8" height="10.7" fill="url(#g5)"/><rect x="4.7" y="53.15" width="28.5" height="1.5" fill="#fde3d8"/><rect x="4.7" y="55.85" width="30.0" height="0.9" fill="#f9a994"/><rect x="4.7" y="57.7" width="11.6" height="1.9" fill="#fbc23e" rx="0.5"/><ellipse cx="51.5" cy="56.3" rx="9.8" ry="3.6" fill="#fbe5d6"/><ellipse cx="51.5" cy="58.2" rx="6.5" ry="1.4" fill="#f9c25a"/><rect x="43.5" y="53.8" width="6.2" height="2.3" fill="#e2423a" rx="0.6"/><rect x="51.6" y="53.8" width="6.2" height="2.3" fill="#e2423a" rx="0.6"/><rect x="41" y="51.6" width="18" height="1" fill="#fde9df"/></g></svg>
<div class="a td" style="left:734.3px;top:582.84px;height:12px;line-height:12px;letter-spacing:-0.201px;"><span class="l">2020</span>年<span class="l">07</span>月<span class="l">11</span>日 <span class="l">19:54:15</span></div>
<div class="a td" style="left:876.8px;top:582.84px;height:12px;line-height:12px;">秦荣古</div>
<div class="a tag" style="left:940.4px;top:581.24px;width:39.2px;height:15.2px;line-height:15.2px">会员充值</div>
<div class="a td" style="left:1013px;top:582.84px;height:12px;line-height:12px;letter-spacing:-0.221px;"><span class="l">2020</span>年<span class="l">07</span>月<span class="l">11</span>日 <span class="l">19:55:47</span></div>
<div class="a td" style="left:1155.6px;top:582.84px;height:12px;line-height:12px;">审核通过</div>
<div class="a " style="left:158.2px;top:706.28px;width:1051px;height:1px;background:#ededed"></div>
<div class="a td" style="left:168.7px;top:662.07px;height:12px;line-height:12px;letter-spacing:-0.241px;"><span class="l">SY2007111715511440</span></div>
<div class="a td" style="left:296.5px;top:662.07px;height:12px;line-height:12px;letter-spacing:0.214px;"><span class="l">qm</span>梅梅</div>
<div class="a td" style="left:384.6px;top:662.07px;height:12px;line-height:12px;letter-spacing:-0.254px;"><span class="l">13797406256</span></div>
<div class="a td" style="left:472.5px;top:662.07px;height:12px;line-height:12px;letter-spacing:0.214px;"><span class="l">qm</span>梅梅</div>
<div class="a td" style="left:560.3px;top:662.07px;height:12px;line-height:12px;letter-spacing:-0.293px;"><span class="l">5<span style="position:relative;top:-0.8px">00.00</span></span></div>
<svg style="left:627.8px;top:633.75px" width="66.8" height="66.8" viewBox="0 0 66.8 66.8"><circle cx="33.4" cy="33.4" r="32.35" fill="none" stroke="#d3cece" stroke-width="2.1"/><text x="33.4" y="43.8" text-anchor="middle" font-family="Liberation Sans, sans-serif" font-size="31.6" textLength="47.6" lengthAdjust="spacingAndGlyphs" fill="#c9c4c4">404</text><text x="33.4" y="43.8" text-anchor="middle" font-family="Liberation Sans, sans-serif" font-size="31.6" textLength="47.6" lengthAdjust="spacingAndGlyphs" fill="none" stroke="#fff" stroke-width="0.3">404</text></svg>
<div class="a td" style="left:734.3px;top:662.07px;height:12px;line-height:12px;letter-spacing:-0.201px;"><span class="l">2020</span>年<span class="l">07</span>月<span class="l">11</span>日 <span class="l">17:15:51</span></div>
<div class="a td" style="left:876.8px;top:662.07px;height:12px;line-height:12px;">秦荣古</div>
<div class="a tag" style="left:940.4px;top:660.47px;width:39.2px;height:15.2px;line-height:15.2px">会员充值</div>
<div class="a td" style="left:1013px;top:662.07px;height:12px;line-height:12px;letter-spacing:-0.221px;"><span class="l">2020</span>年<span class="l">07</span>月<span class="l">11</span>日 <span class="l">17:17:48</span></div>
<div class="a td" style="left:1155.6px;top:662.07px;height:12px;line-height:12px;">审核通过</div>
<div class="a " style="left:158px;top:205px;width:1px;height:500px;background:#ececec"></div>
<div class="a " style="left:0px;top:692px;width:1280px;height:6px;background:linear-gradient(90deg,#9db8d7 0,#a3bcd9 60%,#9ab3d3 86%,#7391b8 89%,#6f8db4 100%)"></div>
<div class="a " style="left:0px;top:692px;width:1280px;height:1px;background:rgba(255,255,255,.35)"></div>
<svg style="left:0;top:692px" width="1280" height="6" viewBox="0 692 1280 6"><circle cx="18" cy="703.6" r="10.6" fill="#b3cbe4" stroke="#6d8cb2" stroke-width="1"/><rect x="49.7" y="695.4" width="19.7" height="10" rx="3.5" fill="#fff"/><rect x="81.5" y="692.8" width="38.5" height="10" rx="1.5" fill="#c4d5e8" stroke="#6f8cb0" stroke-width="0.8"/><rect x="122.8" y="692.8" width="38.5" height="10" rx="1.5" fill="#c4d5e8" stroke="#6f8cb0" stroke-width="0.8"/><rect x="164" y="692.8" width="38.5" height="10" rx="1.5" fill="#c4d5e8" stroke="#6f8cb0" stroke-width="0.8"/><rect x="91" y="696.6" width="5.5" height="4" fill="#c9a56c"/><path d="M141 700 L144 695.4 L147 700 Z" fill="#f3e040"/><circle cx="183" cy="702" r="7" fill="#e03a2d"/><rect x="1237" y="697" width="4" height="2" fill="#fff"/><rect x="1244" y="697" width="5" height="2" fill="#fff"/><rect x="1271.5" y="692.5" width="9" height="8" fill="#8aa2c2" stroke="#5f7da3" stroke-width="0.8"/></svg>
<div class="a " style="left:0px;top:692px;width:1px;height:6px;background:#0d7ccf"></div>
</body>
</html>
